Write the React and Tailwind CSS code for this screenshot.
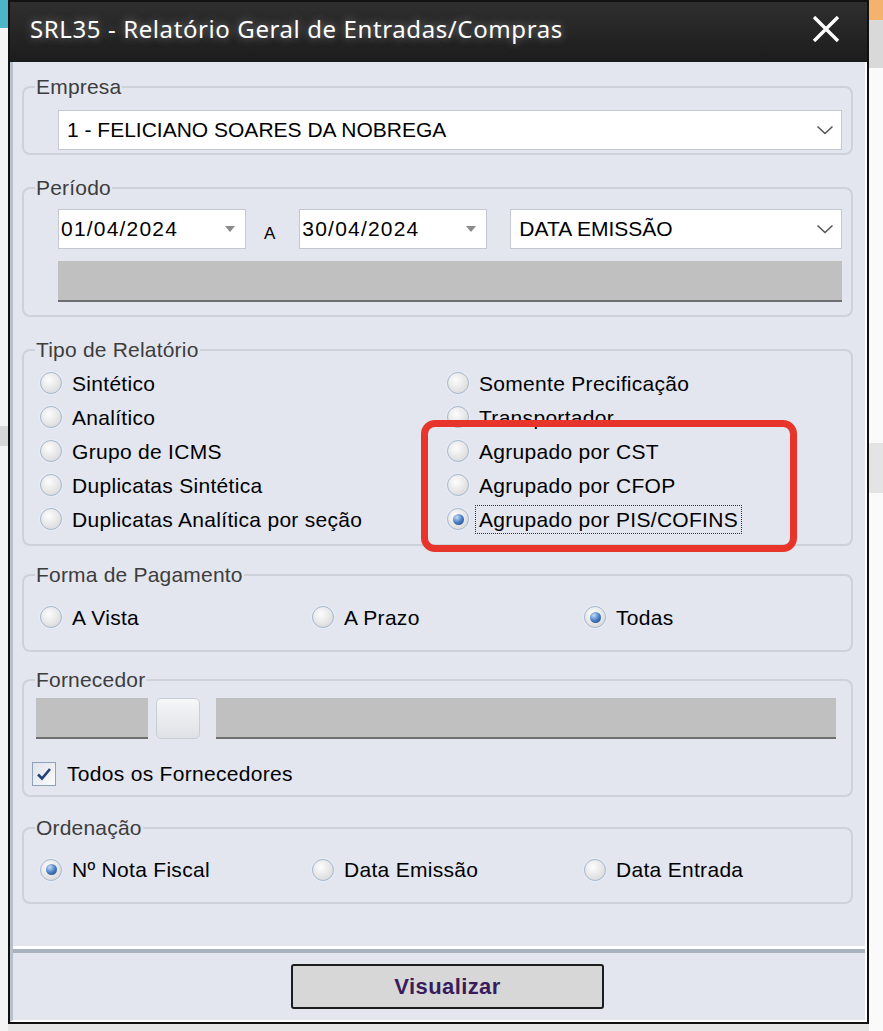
import React from "react"

const font = { fontFamily: '"Liberation Sans", Arial, sans-serif' }

function Radio({ checked }) {
  return (
    <span className="flex h-[22px] w-[22px] shrink-0 items-center justify-center rounded-full border border-[#a7b8d1] bg-[radial-gradient(circle_at_40%_35%,#fdfdfd,#d2d2d2)] shadow-[0_0_0_1px_#e6ecf5]">
      {checked && (
        <span className="h-[11px] w-[11px] rounded-full bg-[radial-gradient(circle_at_35%_30%,#c4dcf7,#4a7fc6_50%,#173b74)]" />
      )}
    </span>
  )
}

function Option({ label, checked, focus }) {
  return (
    <div className="flex h-[34px] items-center gap-[6px]">
      <Radio checked={checked} />
      <span
        className={
          "h-[29px] whitespace-nowrap border px-[3px] leading-[27px] tracking-[0.3px] text-black " +
          (focus ? "border-dotted border-[#333]" : "border-transparent")
        }
      >
        {label}
      </span>
    </div>
  )
}

function Group({ title, className = "", children }) {
  return (
    <fieldset className={"rounded-[8px] border-2 border-[#cdd1d8] p-0 " + className}>
      <legend className="ml-[11px] px-[1px] text-[21px] leading-[24px] tracking-[0.2px] text-[#3d3d3d]">{title}</legend>
      {children}
    </fieldset>
  )
}

function Chevron() {
  return (
    <svg width="18" height="10" viewBox="0 0 18 10" className="shrink-0">
      <path d="M1.5 1.5 L9 8.5 L16.5 1.5" fill="none" stroke="#555" strokeWidth="1.6" />
    </svg>
  )
}

function DateBox({ value }) {
  return (
    <div className="flex h-[40px] w-[188px] items-center justify-between border border-[#c3c8d0] bg-white pl-[2px] pr-[10px]">
      <span className="tracking-[1.2px] text-black">{value}</span>
      <svg width="10" height="6" viewBox="0 0 10 6">
        <path d="M0 0 H10 L5 6 Z" fill="#8a8a8a" />
      </svg>
    </div>
  )
}

function GrayField({ className }) {
  return <div className={"h-[41px] border-b-2 border-[#6f6f6f] bg-[#c0c0c0] " + className} />
}

export default function App() {
  return (
    <div className="relative flex h-[1031px] w-[883px] overflow-hidden bg-[#e6e6e6] text-[21px]" style={font}>
      {/* desktop behind, left */}
      <div className="flex w-[8px] flex-col">
        <div className="h-[28px] bg-[#4cb6c6]" />
        <div className="h-[398px] bg-[#f4f4f4]" />
        <div className="h-[20px] bg-[#d6d6d6]" />
        <div className="flex-1 bg-[#f4f4f4]" />
      </div>

      {/* dialog window */}
      <div className="flex h-[1024px] w-[861px] flex-col border-2 border-[#111]">
        <div className="flex h-[60px] items-center justify-between bg-[linear-gradient(#2f2f2f,#1c1c1c)] pb-[6px] pl-[20px] pr-[27px]">
          <span
            className="text-[24px] tracking-[0.6px] text-white [text-shadow:0_0_8px_rgba(210,210,210,0.55)]"
            style={{ fontFamily: '"Noto Sans", "Open Sans", sans-serif' }}
          >
            SRL35 - Relatório Geral de Entradas/Compras
          </span>
          <svg width="28" height="26" viewBox="0 0 28 26">
            <path d="M2 1 L26 25 M26 1 L2 25" stroke="white" strokeWidth="3.4" />
          </svg>
        </div>

        <div className="flex flex-1 flex-col border-b-2 border-l-[3px] border-r-2 border-b-white border-l-[#b8c0cb] border-r-white bg-[#e3e6ef]">
          <div className="flex flex-1 flex-col pl-[9px] pr-[12px] pt-[13px]">
            <Group title="Empresa">
              <div className="pb-[3px] pl-[34px] pr-[9px] pt-[11px]">
                <div className="flex h-[40px] items-center justify-between border border-[#c3c8d0] bg-white pl-[8px] pr-[7px]">
                  <span className="text-black">1 - FELICIANO SOARES DA NOBREGA</span>
                  <Chevron />
                </div>
              </div>
            </Group>

            <Group title="Período" className="mt-[21px]">
              <div className="flex flex-col gap-[12px] pb-[13px] pl-[34px] pr-[9px] pt-[9px]">
                <div className="flex items-center">
                  <DateBox value="01/04/2024" />
                  <span className="ml-[18px] mr-[24px] pt-[10px] text-[17px] text-black">A</span>
                  <DateBox value="30/04/2024" />
                  <div className="ml-[23px] flex h-[40px] flex-1 items-center justify-between border border-[#c3c8d0] bg-white pl-[8px] pr-[7px]">
                    <span className="text-black">DATA EMISSÃO</span>
                    <Chevron />
                  </div>
                </div>
                <GrayField className="w-full" />
              </div>
            </Group>

            <Group title="Tipo de Relatório" className="mt-[21px]">
              <div className="grid grid-cols-[407px_1fr] pb-[8px] pl-[16px] pt-[4px]">
                <div className="flex flex-col">
                  <Option label="Sintético" />
                  <Option label="Analítico" />
                  <Option label="Grupo de ICMS" />
                  <Option label="Duplicatas Sintética" />
                  <Option label="Duplicatas Analítica por seção" />
                </div>
                <div className="flex flex-col">
                  <Option label="Somente Precificação" />
                  <Option label="Transportador" />
                  <Option label="Agrupado por CST" />
                  <Option label="Agrupado por CFOP" />
                  <Option label="Agrupado por PIS/COFINS" checked focus />
                </div>
              </div>
            </Group>

            <Group title="Forma de Pagamento" className="mt-[17px]">
              <div className="grid grid-cols-[272px_272px_1fr] pb-[16px] pl-[16px] pt-[13px]">
                <Option label="A Vista" />
                <Option label="A Prazo" />
                <Option label="Todas" checked />
              </div>
            </Group>

            <Group title="Fornecedor" className="mt-[16px]">
              <div className="flex flex-col pb-[5px] pr-[15px] pt-[6px]">
                <div className="ml-[12px] flex gap-[8px]">
                  <GrayField className="w-[112px]" />
                  <div className="mr-[8px] h-[41px] w-[44px] rounded-[5px] border border-[#c9cdd4] bg-[linear-gradient(#f6f7f9,#e9ebef_50%,#dfe2e7)]" />
                  <GrayField className="flex-1" />
                </div>
                <div className="ml-[8px] mt-[19px] flex items-center gap-[11px]">
                  <span className="flex h-[24px] w-[24px] items-center justify-center border border-[#8fa2bd] bg-[linear-gradient(135deg,#dfe3ea,#fbfbfc)]">
                    <svg width="16" height="14" viewBox="0 0 16 14">
                      <path d="M2 7.5 L6 11.5 L14 2" fill="none" stroke="#25407a" strokeWidth="2.6" />
                    </svg>
                  </span>
                  <span className="tracking-[0.3px] text-black">Todos os Fornecedores</span>
                </div>
              </div>
            </Group>

            <Group title="Ordenação" className="mt-[19px]">
              <div className="grid grid-cols-[272px_272px_1fr] pb-[15px] pl-[16px] pt-[13px]">
                <Option label="Nº Nota Fiscal" checked />
                <Option label="Data Emissão" />
                <Option label="Data Entrada" />
              </div>
            </Group>
          </div>

          <div className="h-[3px] bg-white" />
          <div className="h-[4px] bg-[#aab2bd]" />
          <div className="flex h-[67px] items-start pl-[278px] pt-[11px]">
            <button className="flex h-[45px] w-[313px] items-center justify-center rounded-[3px] border-2 border-[#1d1d1d] bg-[#d7d7d7] text-[22px] font-bold tracking-[0.4px] text-[#3a1c5c]">
              Visualizar
            </button>
          </div>
        </div>
      </div>

      {/* desktop behind, right */}
      <div className="flex w-[14px] flex-col">
        <div className="h-[20px] bg-[#f3b26e]" />
        <div className="h-[48px] bg-[#d9d9d9]" />
        <div className="h-[375px] bg-[#fafafa]" />
        <div className="h-[50px] bg-[#e4e4e4]" />
        <div className="flex-1 bg-[#fafafa]" />
      </div>

      {/* red annotation box */}
      <div className="absolute left-[421px] top-[420px] h-[132px] w-[376px] rounded-[14px] border-[7px] border-[#e7352b]" />
    </div>
  )
}
